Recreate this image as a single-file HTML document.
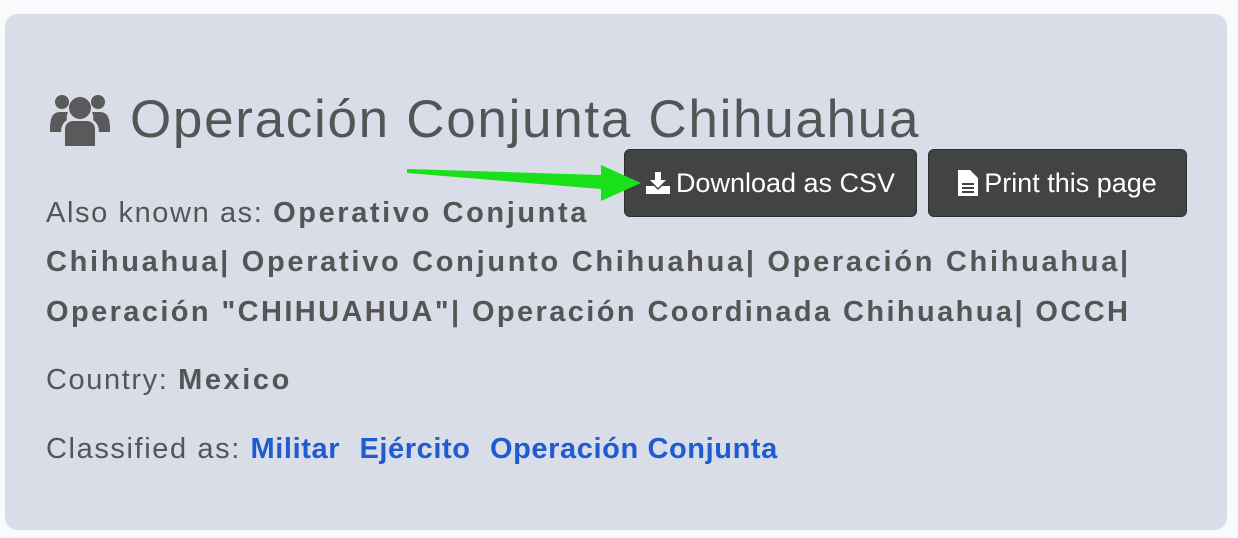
<!DOCTYPE html>
<html><head><meta charset="utf-8"><style>
body{margin:0;width:1238px;height:538px;background:#fafafc;font-family:"Liberation Sans",sans-serif;position:relative;overflow:hidden}
.card{position:absolute;left:5px;top:14px;width:1222px;height:516px;background:#d9dde8;border-radius:12px}
.t{position:absolute;white-space:nowrap;color:#555}
h1{position:absolute;left:130px;top:89px;margin:0;font-weight:normal;font-size:53px;color:#555;white-space:nowrap;letter-spacing:1.7px}
.l{font-size:29px;color:#555;letter-spacing:1.6px}
b{color:#555;letter-spacing:2.6px}
.blue{color:#1f5bd1;font-weight:bold;letter-spacing:0.6px}
.btn{position:absolute;top:149px;height:68px;background:#424444;border:1px solid #2e2e2e;border-radius:6px;color:#fff;font-size:27px;display:flex;align-items:center;justify-content:center;box-sizing:border-box}
</style></head><body>
<div class="card"></div>
<svg style="position:absolute;left:50px;top:94px" width="60" height="52" viewBox="0 0 60 52" fill="#5a5a5a">
<circle cx="30" cy="14" r="11"/><circle cx="12" cy="8" r="7"/><circle cx="48" cy="8" r="7"/>
<path d="M15 52 V36 Q15 27 24 27 H36 Q45 27 45 36 V52 Z"/>
<path d="M0 34 Q0 18 10 18 H18 Q16 22 17 26 Q11 30 11 38 H0Z"/>
<path d="M60 34 Q60 18 50 18 H42 Q44 22 43 26 Q49 30 49 38 H60Z"/>
</svg>
<h1>Operación Conjunta Chihuahua</h1>
<div class="t l" style="left:46px;top:197px">Also known as: <b>Operativo Conjunta</b></div>
<div class="t l" style="left:46px;top:246px"><b style="letter-spacing:2.7px">Chihuahua| Operativo Conjunto Chihuahua| Operación Chihuahua|</b></div>
<div class="t l" style="left:46px;top:296px"><b style="letter-spacing:2.4px">Operación "CHIHUAHUA"| Operación Coordinada Chihuahua| OCCH</b></div>
<div class="t l" style="left:46px;top:364px">Country: <b>Mexico</b></div>
<div class="t l" style="left:46px;top:433px">Classified as: <span class="blue">Militar</span>&nbsp; <span class="blue">Ejército</span>&nbsp; <span class="blue">Operación Conjunta</span></div>
<div class="btn" style="left:624px;width:293px"><svg width="24" height="22" viewBox="0 0 24 22" fill="#fff" style="margin-right:6px"><path d="M9 0h6v8h5l-8 8-8-8h5z"/><path d="M0 14h8l4 4 4-4h8v8H0z"/></svg>Download as CSV</div>
<div class="btn" style="left:928px;width:259px"><svg width="20" height="26" viewBox="0 0 20 26" fill="#fff" style="margin-right:6px"><path d="M0 0h12l8 8v18H0z"/><path d="M4 13h12v2H4zm0 4h12v2H4zm0 4h12v2H4z" fill="#424444"/></svg>Print this page</div>
<svg style="position:absolute;left:405px;top:155px" width="240" height="50"><path d="M2 14 L196 20 L196 10 L236 28 L196 46 L196 34 L2 18Z" fill="#19e019"/></svg>
</body></html>
